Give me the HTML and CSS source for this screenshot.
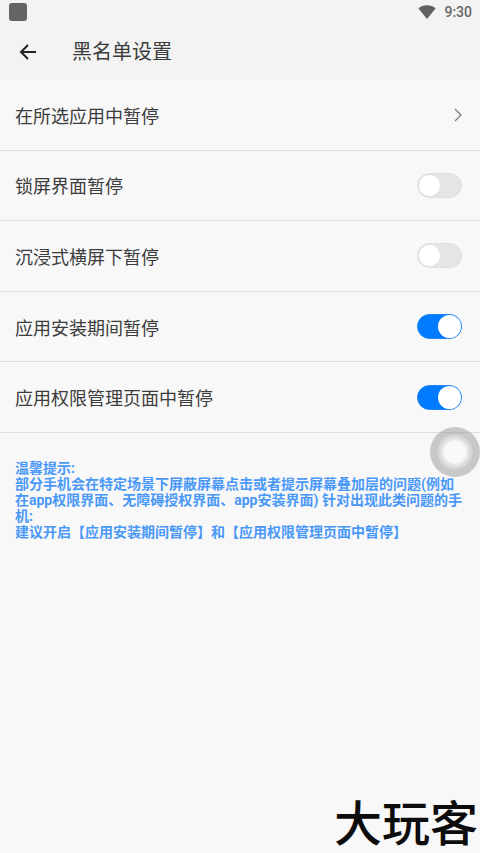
FILE: index.html
```html
<!DOCTYPE html>
<html lang="zh-CN">
<head>
<meta charset="utf-8">
<meta name="viewport" content="width=device-width, initial-scale=1">
<title>黑名单设置</title>
<link rel="stylesheet" href="styles.css">
</head>
<body>
<header class="top">
  <div class="status">
    <span class="status-app"></span>
    <svg class="wifi" viewBox="0 0 18 14" aria-hidden="true"><path d="M9 14 0.3 3.2C2.8 1.2 5.8 0.2 9 0.2s6.200 1 8.700 3z"/></svg>
    <time class="clock">9:30</time>
  </div>
  <div class="bar">
    <button class="back" type="button" aria-label="返回">
      <svg viewBox="0 0 18 18" aria-hidden="true"><path d="M17 9H2.500M9 2 2 9l7 7"/></svg>
    </button>
    <h1 class="title">黑名单设置</h1>
  </div>
</header>
<main class="content">
  <ul class="settings">
    <li><a class="row" href="#apps"><span>在所选应用中暂停</span>
      <svg class="chevron" viewBox="0 0 8 14" aria-hidden="true"><path d="M1 1l6 6-6 6"/></svg></a></li>
    <li><label class="row"><span>锁屏界面暂停</span><input class="switch" type="checkbox"></label></li>
    <li><label class="row"><span>沉浸式横屏下暂停</span><input class="switch" type="checkbox"></label></li>
    <li><label class="row"><span>应用安装期间暂停</span><input class="switch" type="checkbox" checked></label></li>
    <li><label class="row"><span>应用权限管理页面中暂停</span><input class="switch" type="checkbox" checked></label></li>
  </ul>
  <section class="tips">
    <p>温馨提示:</p>
    <p>部分手机会在特定场景下屏蔽屏幕点击或者提示屏幕叠加层的问题(例如在app权限界面、无障碍授权界面、app安装界面) 针对出现此类问题的手机:</p>
    <p>建议开启【应用安装期间暂停】和【应用权限管理页面中暂停】</p>
  </section>
</main>
<button class="assist" type="button" aria-label="悬浮球"></button>
<footer class="brand">大玩客</footer>
</body>
</html>
```
FILE: styles.css
```css
* {
  box-sizing: border-box;
}

body {
  display: flex;
  flex-direction: column;
  min-height: 100vh;
  margin: 0;
  background: #f8f8f8;
  color: #3c3c3c;
  font-family: Roboto, "Noto Sans CJK SC", sans-serif;
}

.top {
  background: #f3f3f3;
}

.status {
  display: flex;
  align-items: center;
  height: 24px;
  padding: 0 8px;
}

.status-app {
  width: 18px;
  height: 18px;
  margin: 0 auto 0 1px;
  border-radius: 3px;
  background: #646464;
}

.wifi {
  width: 18px;
  height: 14px;
  fill: #606060;
}

.clock {
  margin-left: 8px;
  color: #666;
  font-size: 14px;
  font-weight: 500;
  line-height: 24px;
}

.bar {
  display: flex;
  align-items: center;
  height: 56px;
  padding: 0 16px;
}

.back {
  display: flex;
  align-items: center;
  justify-content: center;
  width: 24px;
  height: 24px;
  padding: 0;
  border: 0;
  background: none;
}

.back svg {
  width: 18px;
  height: 18px;
  fill: none;
  stroke: #222;
  stroke-width: 2;
}

.title {
  margin: 0 0 0 32px;
  font-size: 20px;
  font-weight: 400;
  line-height: 28px;
}

.settings {
  display: grid;
  grid-auto-rows: 1fr;
  min-height: 353px;
  margin: 0;
  padding: 0;
  list-style: none;
}

.row {
  display: flex;
  align-items: center;
  justify-content: space-between;
  height: 100%;
  padding: 0 18px 0 15px;
  border-bottom: 1px solid #e0e0e0;
  color: inherit;
  font-size: 18px;
  text-decoration: none;
}

.chevron {
  width: 8px;
  height: 14px;
  fill: none;
  stroke: #777;
  stroke-width: 1.200;
}

.switch {
  appearance: none;
  display: flex;
  width: 45px;
  height: 25px;
  margin: 0;
  padding: 1px;
  border: 1px solid #dedede;
  border-radius: 13px;
  background: #e5e5e5;
}

.switch::before {
  content: "";
  width: 21px;
  height: 21px;
  border-radius: 50%;
  background: #fff;
}

.switch:checked {
  justify-content: flex-end;
  padding: 0;
  border-color: #1a84f5;
  background: #007aff;
}

.switch:checked::before {
  width: 23px;
  height: 23px;
}

.tips {
  padding: 27px 15px;
  color: #4a98f8;
  font-size: 14px;
  font-weight: 700;
  line-height: 16px;
}

.tips p {
  margin: 0;
}

.assist {
  position: absolute;
  top: 427px;
  right: 0;
  width: 50px;
  height: 50px;
  padding: 0;
  border: 0;
  border-radius: 50%;
  background: radial-gradient(circle, #f9f9f9 11px, #e8e8e8 12px, #e5e5e5 14px, #d9d9d9 15px, #d6d6d6 17px, rgba(128, 128, 128, 0.4) 18px);
}

.brand {
  margin-top: auto;
  padding-right: 2px;
  color: #0c0c0c;
  font-size: 48px;
  font-weight: 500;
  line-height: 56px;
  text-align: right;
}
```
